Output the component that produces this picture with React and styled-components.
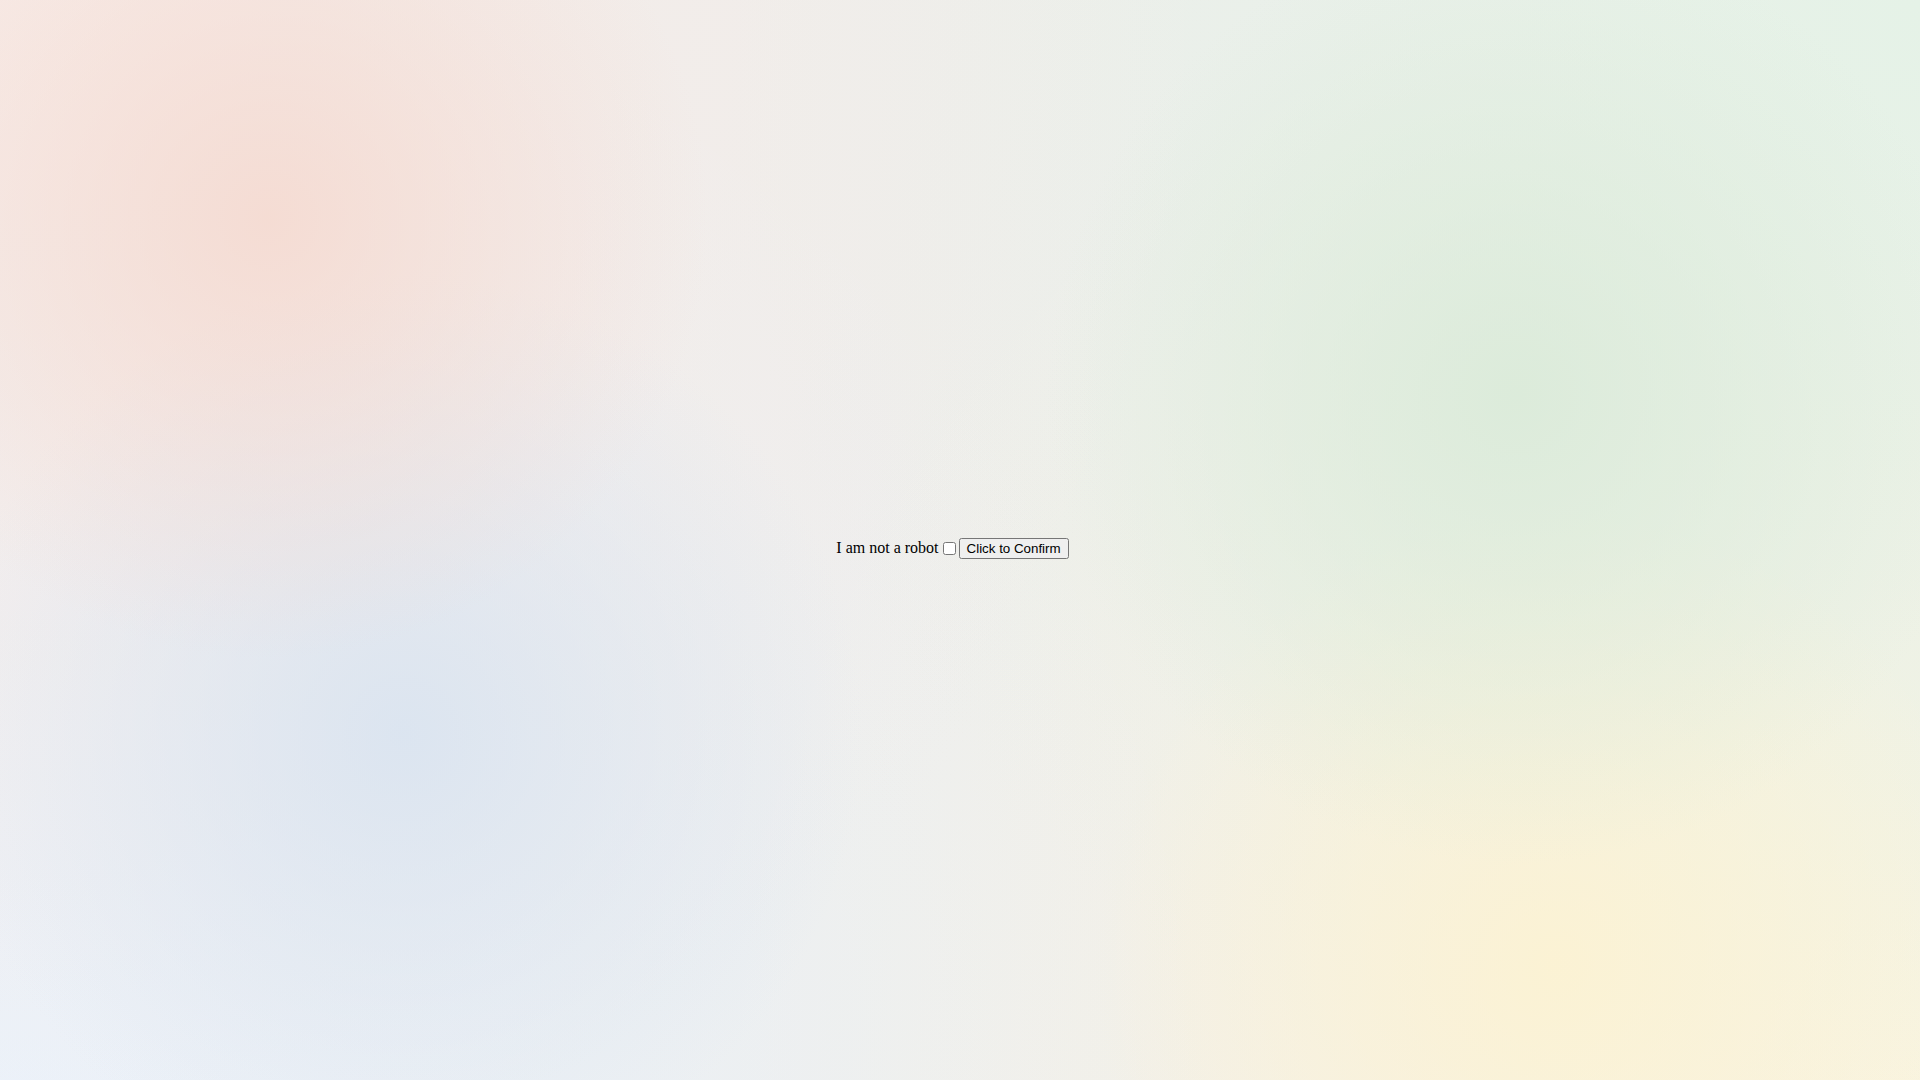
import React from "react";
import styled, { createGlobalStyle } from "styled-components";

const GlobalStyle = createGlobalStyle`
  html {
    overflow-y: scroll;
    background-color: #eeeeec;
    background-image:
      radial-gradient(circle at 14% 20%, rgba(245, 216, 206, 0.8) 0, rgba(245, 216, 206, 0) 440px),
      radial-gradient(circle at 79% 36%, rgba(217, 234, 216, 0.85) 0, rgba(217, 234, 216, 0) 470px),
      radial-gradient(circle at 21% 67%, rgba(216, 227, 240, 0.85) 0, rgba(216, 227, 240, 0) 460px),
      radial-gradient(circle at 81% 88%, rgba(252, 242, 210, 0.9) 0, rgba(252, 242, 210, 0) 460px),
      radial-gradient(circle at 0 0, #f7ebe7 0, rgba(247, 235, 231, 0) 55%),
      radial-gradient(circle at 100% 0, #e5f2e7 0, rgba(229, 242, 231, 0) 55%),
      radial-gradient(circle at 0 100%, #eaf2fb 0, rgba(234, 242, 251, 0) 55%),
      radial-gradient(circle at 100% 100%, #fbf4e0 0, rgba(251, 244, 224, 0) 55%);
    background-repeat: no-repeat;
    background-size: 100% 100%;
    min-height: 100%;
  }
  body {
    margin: 8px;
    font-family: "Liberation Serif", "Times New Roman", serif;
    font-size: 16px;
    color: #000;
  }
`;

const Page = styled.main`
  min-height: 100vh;
  padding-right: 15px;
  display: flex;
  align-items: center;
  justify-content: center;
`;

const Form = styled.form`
  display: flex;
  align-items: center;
`;

const Label = styled.label`
  font-family: "Liberation Serif", "Times New Roman", serif;
  font-size: 16px;
  line-height: 18px;
`;

const Check = styled.input`
  width: 13px;
  height: 13px;
  margin: 3px 3px 3px 4px;
`;

const Confirm = styled.button`
  font-family: "Liberation Sans", Arial, sans-serif;
  font-size: 13.333px;
  padding: 1px 6px;
`;

export default function App() {
  return (
    <>
      <GlobalStyle />
      <Page>
        <Form onSubmit={(e) => e.preventDefault()}>
          <Label htmlFor="robot">I am not a robot</Label>
          <Check id="robot" type="checkbox" />
          <Confirm type="button">Click to Confirm</Confirm>
        </Form>
      </Page>
    </>
  );
}
